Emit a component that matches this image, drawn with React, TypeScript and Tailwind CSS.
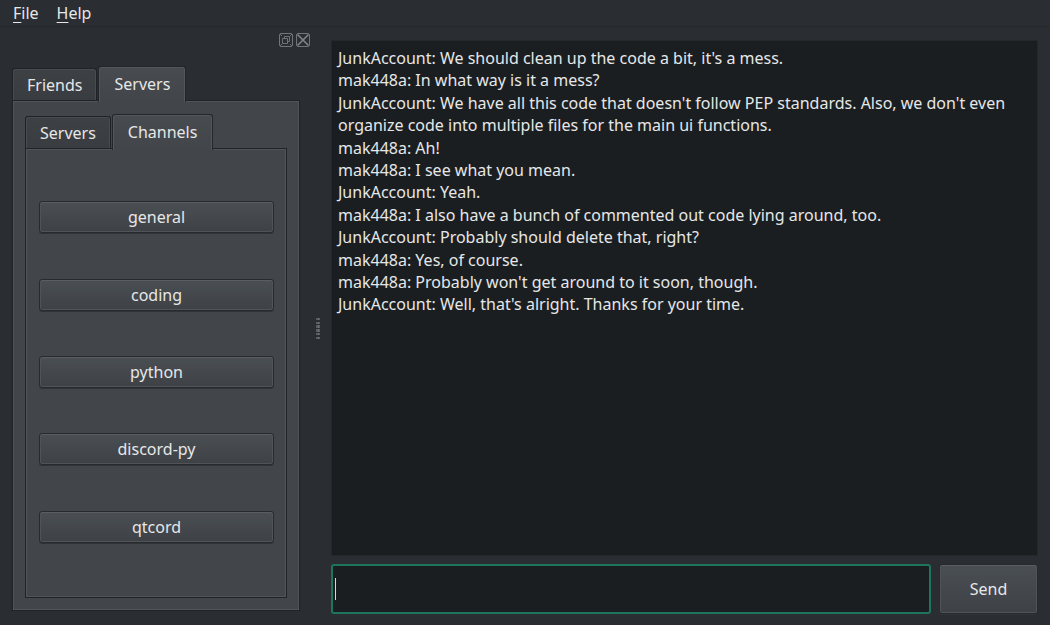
import type { ReactNode } from "react";

const channels = ["general", "coding", "python", "discord-py", "qtcord"];

const messages = [
  { author: "JunkAccount", text: "We should clean up the code a bit, it's a mess." },
  { author: "mak448a", text: "In what way is it a mess?" },
  {
    author: "JunkAccount",
    text: "We have all this code that doesn't follow PEP standards. Also, we don't even organize code into multiple files for the main ui functions.",
  },
  { author: "mak448a", text: "Ah!" },
  { author: "mak448a", text: "I see what you mean." },
  { author: "JunkAccount", text: "Yeah." },
  { author: "mak448a", text: "I also have a bunch of commented out code lying around, too." },
  { author: "JunkAccount", text: "Probably should delete that, right?" },
  { author: "mak448a", text: "Yes, of course." },
  { author: "mak448a", text: "Probably won't get around to it soon, though." },
  { author: "JunkAccount", text: "Well, that's alright. Thanks for your time." },
];

function Tab({ active, children }: { active?: boolean; children: ReactNode }) {
  return (
    <button
      type="button"
      role="tab"
      aria-selected={!!active}
      className={
        active
          ? "relative z-10 -mb-0.5 h-9 rounded-t-[3px] border border-b-0 border-[#24272a] bg-linear-to-b from-[#474c50] to-[#424549] px-[15px] pb-0.5 shadow-[inset_1px_1px_0_#53575b,inset_-1px_0_0_#53575b]"
          : "h-8 rounded-t-[3px] border border-b-0 border-[#202326] bg-linear-to-b from-[#3d4144] to-[#393c40] px-[14px] shadow-[inset_1px_1px_0_#484c50,inset_-1px_0_0_#484c50]"
      }
    >
      {children}
    </button>
  );
}

function Pane({ className, children }: { className: string; children: ReactNode }) {
  return (
    <div
      role="tabpanel"
      className={`flex min-h-0 flex-1 flex-col border border-[#202326] bg-[#424549] shadow-[inset_1px_1px_0_#515559,inset_-1px_-1px_0_#515559] ${className}`}
    >
      {children}
    </div>
  );
}

const raised =
  "rounded-[3px] border border-[#282b2e] bg-linear-to-b from-[#4a4f53] to-[#3e4145] shadow-[inset_0_1px_0_#5a5e62,inset_1px_0_0_#505458,inset_-1px_-1px_0_#505458,0_1px_0_#303337]";

export default function App() {
  return (
    <div className="flex h-screen flex-col bg-[#2a2d31] font-['Noto_Sans',sans-serif] text-[16px] text-[#e6e7e8]">
      <nav className="flex h-[27px] shrink-0 items-center gap-[18px] border-b border-[#26292c] px-[13px]">
        <button type="button">
          <span className="underline decoration-1 underline-offset-3">F</span>ile
        </button>
        <button type="button">
          <span className="underline decoration-1 underline-offset-3">H</span>elp
        </button>
      </nav>

      <div className="flex min-h-0 flex-1">
        <aside className="flex w-[312px] shrink-0 flex-col pb-[14px] pl-3">
          <div className="flex h-[39px] shrink-0 items-start justify-end gap-[3px] pt-[6px] pr-[2px] text-[#85888a]">
            <button type="button" aria-label="Float panel">
              <svg width="14" height="14" viewBox="0 0 14 14" fill="none" stroke="currentColor">
                <path d="M1.5.5h11l1 1v11l-1 1h-11l-1-1v-11z" opacity=".8" />
                <path d="M5.5 5.5v-2h5v5h-2M3.5 5.5h5v5h-5zM1 1l2 2M13 1l-2 2M1 13l2-2M13 13l-2-2" opacity=".75" />
              </svg>
            </button>
            <button type="button" aria-label="Close panel">
              <svg width="14" height="14" viewBox="0 0 14 14" fill="none" stroke="currentColor">
                <path d="M1.5.5h11l1 1v11l-1 1h-11l-1-1v-11z" opacity=".8" />
                <path d="M1.5 1.5l11 11M12.5 1.5l-11 11" strokeWidth="1.5" />
              </svg>
            </button>
          </div>

          <div className="flex min-h-0 w-[288px] flex-1 flex-col">
            <div role="tablist" aria-label="Contacts" className="flex shrink-0 items-end gap-px">
              <Tab>Friends</Tab>
              <Tab active>Servers</Tab>
            </div>
            <Pane className="px-3 pt-[13px] pb-3">
              <div role="tablist" aria-label="Server" className="flex shrink-0 items-end gap-px">
                <Tab>Servers</Tab>
                <Tab active>Channels</Tab>
              </div>
              <Pane className="justify-evenly pt-[7px] pr-3 pb-[9px] pl-[13px]">
                {channels.map((name) => (
                  <button key={name} type="button" className={`h-8 shrink-0 ${raised}`}>
                    {name}
                  </button>
                ))}
              </Pane>
            </Pane>
          </div>
        </aside>

        <div className="flex w-5 shrink-0 items-center justify-center pt-[6px] pr-[8px]">
          <svg width="4" height="22" viewBox="0 0 4 22" fill="#6d7073" aria-hidden="true">
            <path d="M0 0h4v2H0zM0 4h4v2H0zM0 7h4v3H0zM0 11h4v3H0zM0 15h4v2H0zM0 19h4v2H0z" opacity=".7" />
            <path d="M2 0h1v2H2zM2 4h1v2H2zM2 7h1v3H2zM2 11h1v3H2zM2 15h1v2H2zM2 19h1v2H2z" />
          </svg>
        </div>

        <main className="-ml-px flex min-w-0 flex-1 flex-col gap-2 pt-[13px] pr-3 pb-[11px]">
          <div
            role="log"
            className="min-h-0 flex-1 overflow-hidden border border-[#25282b] bg-[#1b1e20] px-[6px] pt-[6px] leading-[1.4]"
          >
            {messages.map((m, i) => (
              <p key={i}>{`${m.author}: ${m.text}`}</p>
            ))}
          </div>
          <form className="flex h-[50px] shrink-0 gap-2" onSubmit={(e) => e.preventDefault()}>
            <div className="relative flex min-w-0 flex-1">
              <input
                type="text"
                aria-label="Message"
                className="min-w-0 flex-1 rounded-[3px] border-2 border-[#1d755c] bg-[#1b1e20] px-1 caret-transparent outline-none"
              />
              <span aria-hidden="true" className="absolute top-[14px] left-1 h-[22px] w-px bg-[#d5d6d7]" />
            </div>
            <button type="submit" className={`w-[99px] ${raised}`}>
              Send
            </button>
          </form>
        </main>
      </div>
    </div>
  );
}
